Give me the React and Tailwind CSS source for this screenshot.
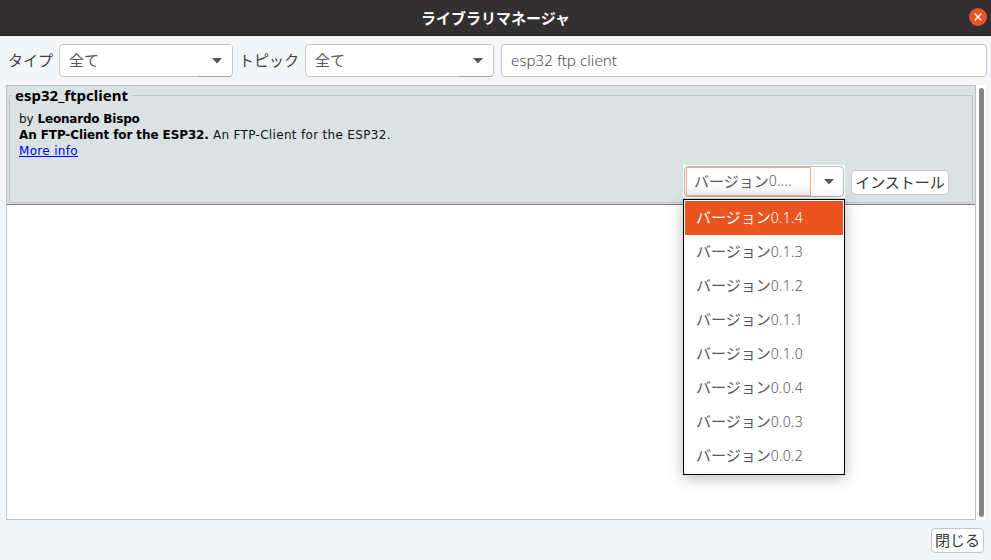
const versions = ['0.1.4', '0.1.3', '0.1.2', '0.1.1', '0.1.0', '0.0.4', '0.0.3', '0.0.2'];

function Arrow() {
  return (
    <svg width="10" height="6" viewBox="0 0 10 6" className="block">
      <path d="M0 0H10L5 5.4Z" fill="#555759" />
    </svg>
  );
}

function Select({ width, label }) {
  return (
    <div className={`${width} flex h-[33px] shrink-0 rounded-[4px] border border-[#c3c6ca] bg-white`}>
      <div className="flex flex-1 items-center pb-[2px] pl-[9px] text-[15px] leading-[20px] text-[#58595b]">{label}</div>
      <div className="flex w-[34px] items-center justify-center rounded-br-[3px] bg-linear-to-b from-white to-[#fdfdfd] pl-[4px] shadow-[0_1px_0_#a4a6a9]">
        <Arrow />
      </div>
    </div>
  );
}

export default function App() {
  return (
    <div className="flex h-[560px] w-[991px] flex-col overflow-hidden bg-[#f4f5f7] font-['Noto_Sans','Noto_Sans_CJK_JP',sans-serif]">
      <header className="relative flex h-[36px] shrink-0 items-center justify-center border-b border-[#211f20] bg-[#333031]">
        <h1 className="font-['Noto_Sans_CJK_JP',sans-serif] text-[15px] leading-[20px] font-bold text-white">ライブラリマネージャ</h1>
        <button className="absolute top-[8px] right-[4px] flex size-[18px] items-center justify-center rounded-full bg-[#e95420]">
          <svg width="8" height="8" viewBox="0 0 8 8"><path d="M.6 .6L7.4 7.4M7.4 .6L.6 7.4" stroke="white" strokeWidth="1.4" /></svg>
        </button>
      </header>

      <div className="flex h-[49px] shrink-0 pt-[8px] font-['Noto_Sans_CJK_JP',sans-serif]">
        <span className="w-[59px] shrink-0 pt-[6px] pl-[8px] text-[15px] leading-[20px] whitespace-nowrap text-[#3e3f41]">タイプ</span>
        <Select width="w-[174px]" label="全て" />
        <span className="w-[72px] shrink-0 pt-[6px] pl-[6px] text-[15px] leading-[20px] whitespace-nowrap text-[#3e3f41]">トピック</span>
        <Select width="w-[189px]" label="全て" />
        <div className="ml-[7px] flex h-[33px] w-[486px] items-center rounded-[4px] border border-[#c3c6ca] bg-white pl-[9px] font-['Noto_Sans',sans-serif] text-[15px] tracking-[0.1px] font-light text-[#4b4d50]">
          esp32 ftp client
        </div>
      </div>

      <div className="ml-[6px] flex h-[435px] shrink-0">
        <main className="w-[970px] border border-[#bcc1c8] bg-white">
          <section className="relative h-[119px] border-b border-[#77797b] bg-[#dae2e3] pt-[9px] pl-[2px]">
            <fieldset className="h-[108px] w-[964px] border border-[#bcc5ca]">
              <div className="-mt-[9px] ml-[3px] w-[118px] bg-[#dae2e3] pl-[2px] text-[15px] leading-[16px] font-bold whitespace-nowrap text-black">esp32_ftpclient</div>
              <div className="mt-[8px] ml-[9px] font-['DejaVu_Sans',sans-serif] text-[12px] leading-[16px] tracking-[0.32px] whitespace-nowrap text-[#101213]">
                <p><span className="tracking-normal">by </span><b className="tracking-[-0.2px] text-black">Leonardo Bispo</b></p>
                <p><b className="tracking-[-0.1px] text-black">An FTP-Client for the ESP32.</b> An FTP-Client for the ESP32.</p>
                <p><a className="text-[#0000ee] underline">More info</a></p>
              </div>
            </fieldset>

            <div className="absolute top-[79px] left-[676px] flex h-[33px] w-[162px] bg-white p-px">
              <div className="flex w-full rounded-[4px] border border-[#b3b7ba]">
                <div className="ml-px flex w-[125px] items-center border border-[#f2aa90] bg-linear-to-b from-white via-white to-[#f2f2f2] pb-[2px] pl-[7px] font-['Noto_Sans_CJK_JP',sans-serif] text-[15px] leading-[20px] whitespace-nowrap text-[#58595b]">
                  バージョン<span className="pt-px font-['Noto_Sans',sans-serif] text-[14px] tracking-[0.3px] font-light">0....</span>
                </div>
                <div className="flex flex-1 items-center justify-center pl-[4px]"><Arrow /></div>
              </div>
            </div>
            <button className="absolute top-[84px] left-[844px] flex h-[25px] w-[98px] items-center justify-center rounded-[4px] border border-[#c3c9cc] bg-white pb-[2px] font-['Noto_Sans_CJK_JP',sans-serif] text-[15px] leading-[20px] whitespace-nowrap text-[#353638]">インストール</button>

            <ul className="absolute top-[113px] left-[676px] z-10 h-[276px] w-[162px] border border-black bg-white pt-px pl-px shadow-[0_3px_14px_rgba(0,0,0,0.28)]">
              {versions.map((v, i) => (
                <li
                  key={v}
                  className={`flex h-[34px] w-[158px] items-center pb-[2px] pl-[11px] font-['Noto_Sans_CJK_JP',sans-serif] text-[15px] leading-[20px] whitespace-nowrap ${i === 0 ? 'bg-[#e95420] text-white' : 'text-[#58595b]'}`}
                >
                  バージョン<span className="pt-px font-['Noto_Sans',sans-serif] text-[14px] tracking-[0.3px] font-light">{v}</span>
                </li>
              ))}
            </ul>
          </section>
        </main>
        <div className="w-[10px] bg-white pt-[3px] pl-[3px]">
          <div className="h-[429px] w-[5px] rounded-full bg-[#858585]" />
        </div>
      </div>

      <footer className="flex justify-end pt-[8px] pr-[7px]">
        <button className="flex h-[25px] w-[53px] items-center justify-center rounded-[4px] border border-[#c3c6ca] bg-white pb-[2px] font-['Noto_Sans_CJK_JP',sans-serif] text-[15px] leading-[20px] whitespace-nowrap text-[#353638]">閉じる</button>
      </footer>
    </div>
  );
}
